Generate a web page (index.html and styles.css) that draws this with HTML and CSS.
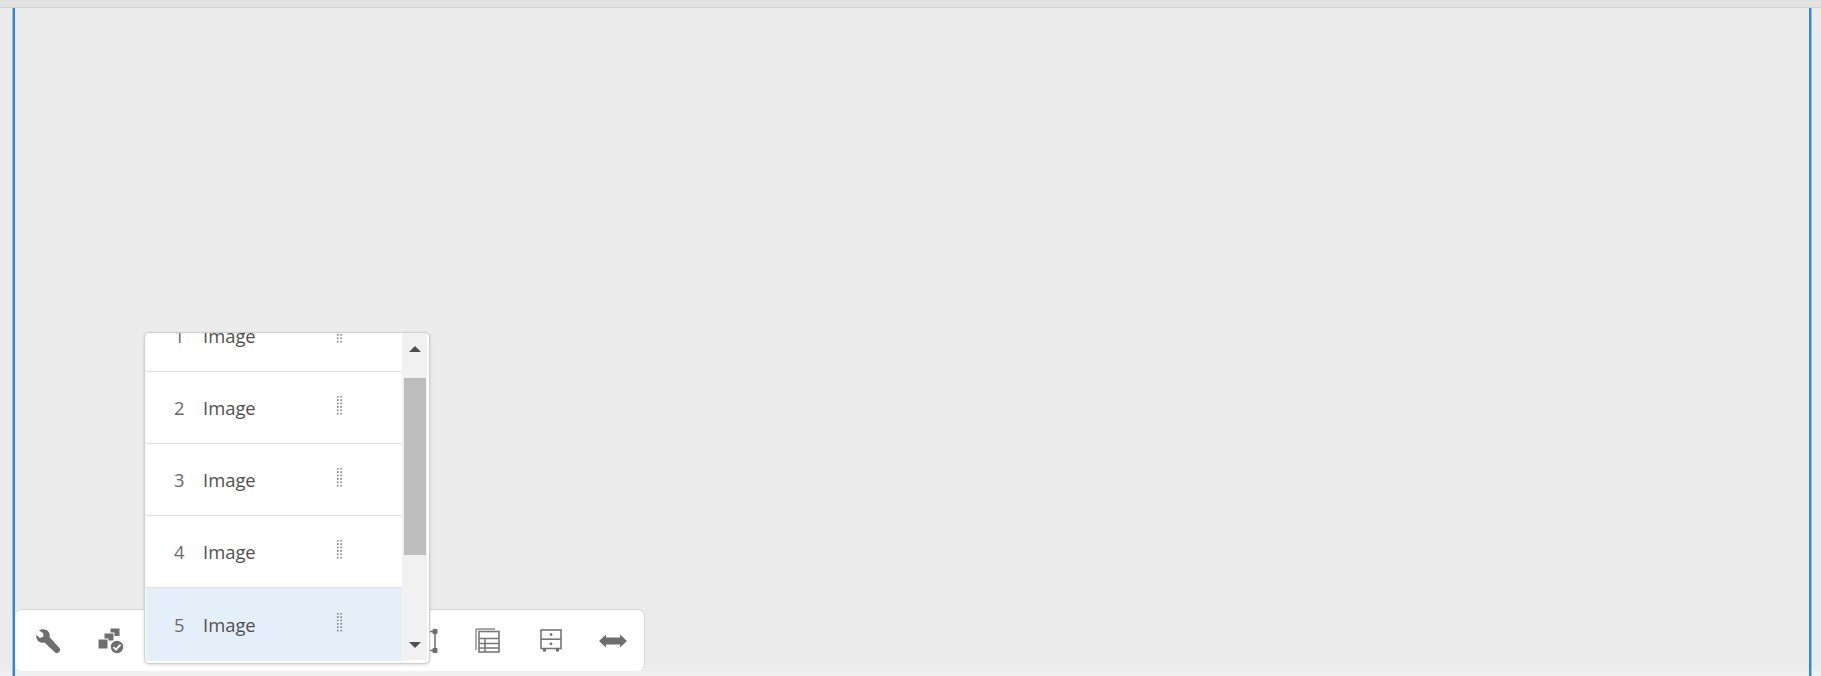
FILE: index.html
```html
<!DOCTYPE html>
<html lang="en">
<head>
<meta charset="utf-8">
<title>Image list</title>
<link rel="stylesheet" href="styles.css">
</head>
<body>
<div class="topbar"></div>
<main class="workspace">
  <div class="canvas">
    <div class="toolbar">
      <button class="tool"><svg width="24" height="24" viewBox="-1 0 24 24"><path class="fill" d="M3 1.500C6-.5 11 0 13 3.500c1 1.500 1 3 .5 4.500L23 18.500a3 3 0 0 1-4.500 4.500L8.500 13.500C5 14.500 1.500 13 .5 9 .2 8 0 7 .3 6L4 9l3.500-1.500L7 4z"/></svg></button>
      <button class="tool"><svg width="26" height="26" viewBox="-1 0 26 26"><rect class="fill ring-thin" x="12" y="0" width="10" height="8.500"/><rect class="fill ring-thin" x="6" y="5" width="10" height="8"/><rect class="fill ring-thin" x="0" y="11" width="10" height="10"/><circle class="fill ring" cx="19" cy="19" r="7"/><path class="check" d="M15.500 19.200l2.500 2.500 4.500-5"/></svg></button>
      <button class="tool"></button>
      <button class="tool"></button>
      <button class="tool"></button>
      <button class="tool"></button>
      <button class="tool"><svg width="24" height="24" viewBox="0 0 24 24"><path class="line" d="M2 2.500h20M22 2.500v19M2 21.500h20"/><rect class="fill" x="19.500" y="0" width="5" height="5" rx="1"/><rect class="fill" x="19.500" y="19" width="5" height="5" rx="1"/></svg></button>
      <button class="tool"><svg width="25" height="25" viewBox="0 0 25 25"><path class="thin" d="M1 22V2a1 1 0 0 1 1-1h18"/><rect class="line" x="4" y="3.500" width="20" height="20.500"/><path class="line" d="M4 10.500h20M4 15.500h20M4 20h20M10 10.500V24"/></svg></button>
      <button class="tool"><svg width="22" height="24" viewBox="0 0 22 24"><rect class="line" x="1" y="1" width="20" height="18.500"/><path class="line" d="M1 10.200h20"/><circle class="fill" cx="11" cy="5.600" r="1.400"/><circle class="fill" cx="11" cy="14.800" r="1.400"/><rect class="fill" x="3" y="19" width="3" height="3.500"/><rect class="fill" x="16" y="19" width="3" height="3.500"/></svg></button>
      <button class="tool"><svg width="28" height="14" viewBox="1 0 28 14"><path class="fill" d="M0 7l7-6.500v3h14v-3L28 7l-7 6.500v-3H7v3z"/></svg></button>
    </div>

    <section class="popup">
      <div class="list">
        <div class="row row-first"><span class="num">1</span><span class="name">Image</span><span class="grip"></span></div>
        <div class="row"><span class="num">2</span><span class="name">Image</span><span class="grip"></span></div>
        <div class="row"><span class="num">3</span><span class="name">Image</span><span class="grip"></span></div>
        <div class="row"><span class="num">4</span><span class="name">Image</span><span class="grip"></span></div>
        <div class="row row-selected"><span class="num">5</span><span class="name">Image</span><span class="grip"></span></div>
      </div>
      <div class="scrollbar">
        <span class="arrow arrow-up"></span>
        <div class="thumb"></div>
        <span class="arrow arrow-down"></span>
      </div>
    </section>
  </div>
</main>
</body>
</html>
```
FILE: styles.css
```css
* { box-sizing: border-box; }
html, body { margin: 0; height: 100%; }
body {
  display: flex;
  flex-direction: column;
  height: 676px;
  overflow: hidden;
  background: #f0f0f0;
  font-family: "Open Sans", "Noto Sans", sans-serif;
}
.topbar {
  height: 8px;
  flex: none;
  background: #e1e1e1;
  border-bottom: 1px solid #d3d3d3;
}
.workspace {
  flex: 1;
  display: flex;
  padding: 0 10px 0 13px;
  background: linear-gradient(#ececec 663px, #f0f0f0 663px);
}
.canvas {
  position: relative;
  flex: 1;
  display: flex;
  flex-direction: column;
  justify-content: flex-end;
  border-left: 2px solid #3485e2;
  border-right: 2px solid #3485e2;
  box-shadow: -1px 0 0 rgba(52, 133, 226, .45), 1px 0 0 rgba(52, 133, 226, .45);
  padding-bottom: 5px;
}
.toolbar {
  width: 630px;
  height: 62px;
  display: flex;
  align-items: center;
  background: #fff;
  border-radius: 7px;
  border-top: 1px solid #d2d2d2;
  border-right: 1px solid #d8d8d8;
}
.tool {
  flex: none;
  width: 63px;
  height: 100%;
  padding: 0;
  border: 0;
  background: none;
  display: flex;
  align-items: center;
  justify-content: center;
}
.tool svg { overflow: visible; }
.fill { fill: #6e6e6e; }
.ring { stroke: #fff; stroke-width: 1.500; }
.ring-thin { stroke: #fff; stroke-width: 1; }
.line { fill: none; stroke: #777; stroke-width: 1.600; }
.thin { fill: none; stroke: #8a8a8a; stroke-width: 1.400; }
.check { fill: none; stroke: #fff; stroke-width: 1.800; }

.popup {
  position: absolute;
  left: 129px;
  bottom: 12px;
  width: 286px;
  height: 332px;
  display: flex;
  background: #fff;
  border: 1px solid #cfcfcf;
  border-radius: 5px;
  box-shadow: 0 1px 3px rgba(0, 0, 0, .15);
  padding: 0 2px 2px 1px;
  overflow: hidden;
}
.list {
  width: 256px;
  flex: none;
  overflow: hidden;
}
.row {
  height: 72px;
  display: flex;
  align-items: center;
  border-bottom: 1px solid #dfdfdf;
  font-size: 18.400px;
  color: #505050;
}
.row-first { margin-top: -33px; }
.row-selected { background: #e5effa; border-bottom: 0; height: 73px; }
.num {
  width: 29px;
  margin-left: 28px;
  color: #6a6a6a;
}
.name { width: 133px; }
.grip {
  width: 7px;
  height: 20px;
  margin-top: -6px;
  background-image: radial-gradient(circle, #8c8c8c 0.9px, transparent 1.1px);
  background-size: 3.500px 3.400px;
}
.scrollbar {
  flex: 1;
  display: flex;
  flex-direction: column;
  align-items: center;
  background: #f1f1f1;
  margin-bottom: 1px;
}
.arrow {
  flex: none;
  width: 0;
  height: 0;
  border-left: 6px solid transparent;
  border-right: 6px solid transparent;
}
.arrow-up { margin-top: 13px; border-bottom: 6px solid #4f4f4f; }
.arrow-down { margin-top: 87px; border-top: 6px solid #4f4f4f; }
.thumb {
  flex: none;
  width: 22px;
  height: 177px;
  margin-top: 26px;
  background: #bdbdbd;
}
```
